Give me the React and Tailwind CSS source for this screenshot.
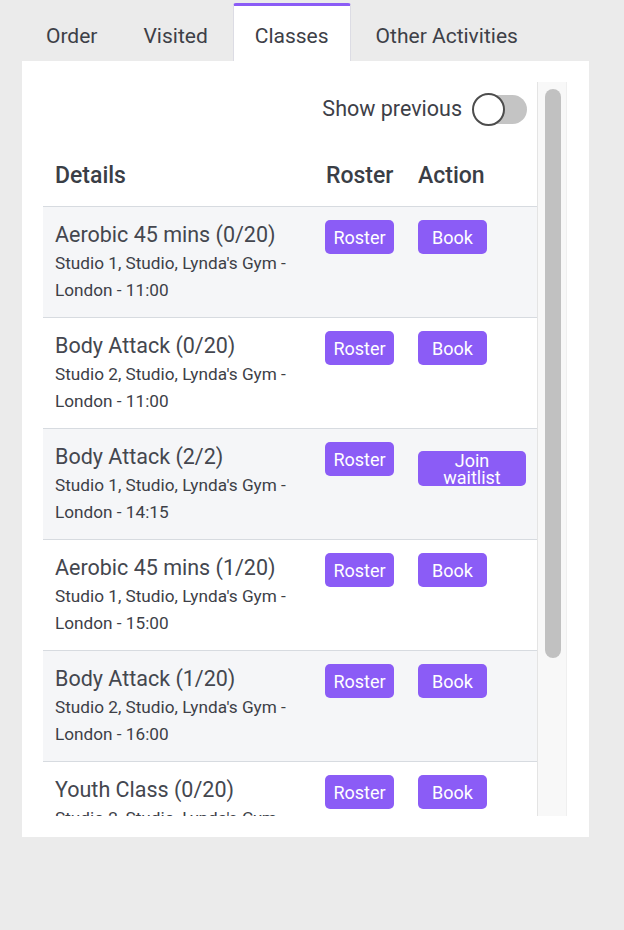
import React, { useState } from 'react';

const tabs = ['Order', 'Visited', 'Classes', 'Other Activities'];

const classes = [
  { name: 'Aerobic 45 mins (0/20)', place: "Studio 1, Studio, Lynda's Gym - London - 11:00", full: false },
  { name: 'Body Attack (0/20)', place: "Studio 2, Studio, Lynda's Gym - London - 11:00", full: false },
  { name: 'Body Attack (2/2)', place: "Studio 1, Studio, Lynda's Gym - London - 14:15", full: true },
  { name: 'Aerobic 45 mins (1/20)', place: "Studio 1, Studio, Lynda's Gym - London - 15:00", full: false },
  { name: 'Body Attack (1/20)', place: "Studio 2, Studio, Lynda's Gym - London - 16:00", full: false },
  { name: 'Youth Class (0/20)', place: "Studio 2, Studio, Lynda's Gym - London - 17:00", full: false },
  { name: 'Body Attack (0/20)', place: "Studio 1, Studio, Lynda's Gym - London - 18:00", full: false }
];

const Tabs = ({ active }) => (
  <div className="flex items-end gap-1 pl-[25px] pt-1 h-[61px]">
    {tabs.map(t => (
      <div
        key={t}
        className={
          t === active
            ? 'h-[58px] px-[21px] pt-[6px] flex items-center bg-white border-t-[3px] border-[#8b5cf6] rounded-t-[3px] border-x border-x-[#dcdce4] text-[21px] text-[#3d4047]'
            : 'h-[58px] px-[21px] pt-[9px] flex items-center text-[21px] text-[#3d4047]'
        }
      >
        {t}
      </div>
    ))}
  </div>
);

const Toggle = ({ on, onChange }) => (
  <button onClick={() => onChange(!on)} className="relative w-[55px] h-[34px] flex items-center">
    <span className="absolute left-[7px] right-0 h-[29px] rounded-full bg-[#c4c4c4]" />
    <span className="absolute left-0 w-[33px] h-[33px] rounded-full bg-white border-[2.5px] border-[#4d4d4d]" />
  </button>
);

const Btn = ({ children, className = '' }) => (
  <button className={`bg-[#8b5cf6] text-white rounded-[5px] text-[18px] ${className}`}>
    {children}
  </button>
);

const ClassRow = ({ item, shaded }) => (
  <div className={`flex border-b border-[#d7dbe0] ${shaded ? 'bg-[#f5f6f8]' : 'bg-white'}`}>
    <div className="w-[271px] px-3 pt-[13px] pb-[13px]">
      <div className="text-[21.5px] leading-[30px] text-[#44474f]">{item.name}</div>
      <div className="text-[17.2px] leading-[27px] text-[#3d4047]">{item.place}</div>
    </div>
    <div className="w-[92px] pl-[11px] pt-[13px]">
      <Btn className="w-[69px] h-[34px]">Roster</Btn>
    </div>
    <div className="w-[131px] pl-3 pt-[13px]">
      {item.full ? (
        <Btn className="w-[108px] h-[35px] mt-[9px] text-[17px] leading-[17px]">
          Join<br />waitlist
        </Btn>
      ) : (
        <Btn className="w-[69px] h-[34px]">Book</Btn>
      )}
    </div>
  </div>
);

export default function App() {
  const [showPrevious, setShowPrevious] = useState(false);

  return (
    <div className="w-[624px] h-[930px] bg-[#ebebeb] font-['Roboto',sans-serif]">
      <Tabs active="Classes" />
      <div className="ml-[22px] w-[567px] h-[776px] bg-white pt-[21px] pl-[21px]">
        <div className="flex h-[734px]">
          <div className="w-[494px] overflow-hidden">
            <div className="flex items-center justify-end gap-[10px] pt-[10px] pr-[10px]">
              <span className="text-[21.5px] text-[#3d4047]">Show previous</span>
              <Toggle on={showPrevious} onChange={setShowPrevious} />
            </div>
            <div className="flex items-end h-[81px] pb-4 border-b border-[#d7dbe0] text-[23px] font-medium text-[#3a3e46] leading-[28px]">
              <div className="w-[271px] px-3">Details</div>
              <div className="w-[92px] pl-3">Roster</div>
              <div className="w-[131px] pl-3">Action</div>
            </div>
            {classes.map((c, i) => (
              <ClassRow key={i} item={c} shaded={i % 2 === 0} />
            ))}
          </div>
          <div className="w-[30px] bg-[#f8f8f8] border-l border-[#e4e4e4] border-r border-r-[#efefef] pt-[7px] pl-[7px]">
            <div className="w-[16px] h-[569px] rounded-full bg-[#c1c1c1]" />
          </div>
        </div>
      </div>
    </div>
  );
}
